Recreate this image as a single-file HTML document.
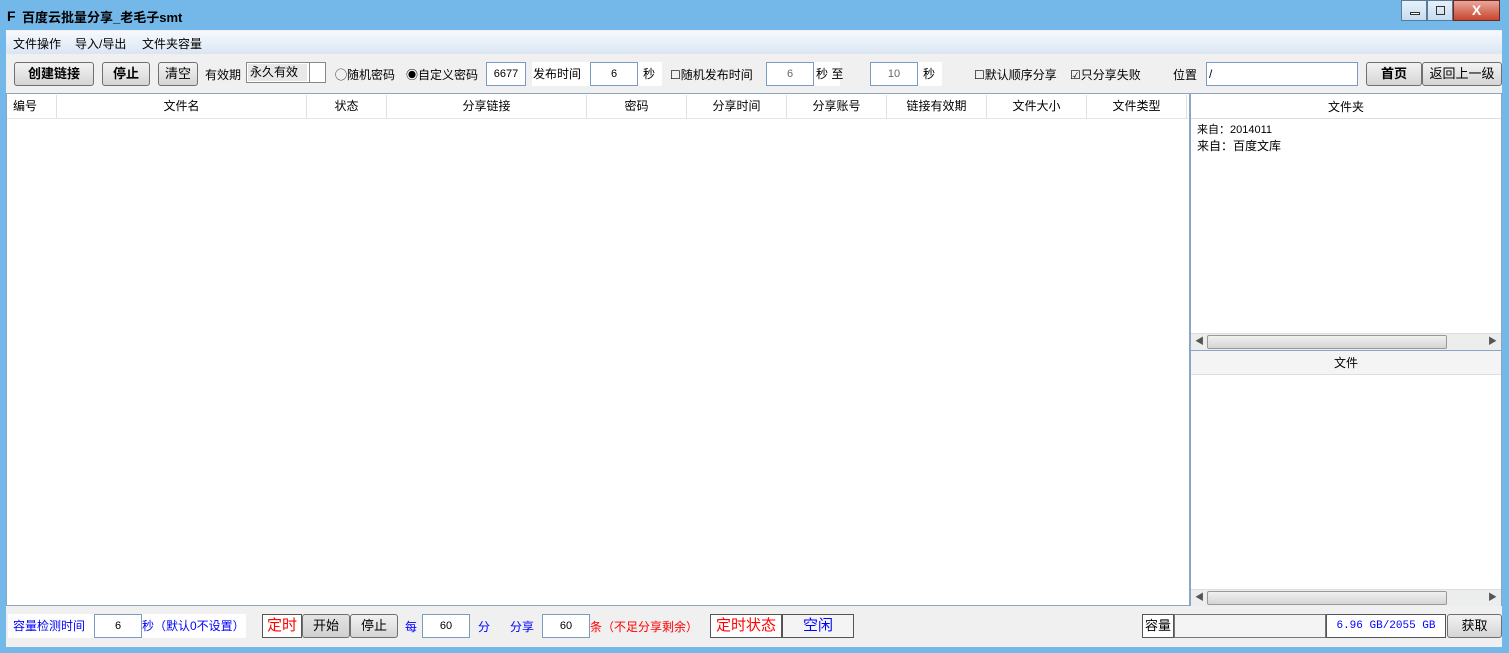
<!DOCTYPE html><html><head><meta charset="utf-8"><style>
*{box-sizing:border-box;margin:0;padding:0}
body{width:1509px;height:653px;background:#74b8ea;font:12px "Liberation Sans","Noto Sans CJK SC",sans-serif;color:#000;position:relative;overflow:hidden}
.a{position:absolute;white-space:nowrap}
.btn{position:absolute;border:1px solid #707070;border-radius:3px;background:linear-gradient(#f2f2f2,#e4e4e4 50%,#d4d4d4);text-align:center;font-size:13px}
.inp{position:absolute;background:#fff;border:1px solid #7a9cc0;text-align:center;font-size:11px}
.hd{position:absolute;top:95px;height:23px;line-height:23px;text-align:center;border-right:1px solid #e0e0e0;background:#fff;font-size:12px}
.blu{color:#0000ff}.red{color:#f00}
.sb{position:absolute;height:17px;background:#eceeee;border-top:1px solid #ddd}
.thumb{position:absolute;top:1px;height:14px;background:linear-gradient(#f0f0f0,#d5d5d5);border:1px solid #999;border-radius:2px}
</style></head><body>
<div class="a" style="left:7px;top:8px;font-size:14px;font-weight:bold">F</div>
<div class="a" style="left:22px;top:7px;font-size:13px;font-weight:bold">百度云批量分享_老毛子smt</div>
<div class="a" style="left:1401px;top:0;width:26px;height:21px;background:linear-gradient(#e8f1fa,#c6dcf0);border:1px solid #5a7a9a"><div style="position:absolute;left:8px;top:11px;width:10px;height:3px;background:#fff;border:1px solid #333"></div></div>
<div class="a" style="left:1427px;top:0;width:26px;height:21px;background:linear-gradient(#e8f1fa,#c6dcf0);border:1px solid #5a7a9a"><div style="position:absolute;left:8px;top:5px;width:9px;height:9px;border:1px solid #333"></div></div>
<div class="a" style="left:1453px;top:0;width:47px;height:21px;background:linear-gradient(#e9a79b,#c8452d);border:1px solid #6a2a20;color:#fff;font-weight:bold;text-align:center;line-height:19px;font-size:14px">X</div>
<div class="a" style="left:6px;top:30px;width:1496px;height:617px;background:#f0f0f0"></div>
<div class="a" style="left:6px;top:31px;width:1496px;height:23px;background:linear-gradient(#f6f9fd,#dbe6f3)"></div>
<div class="a" style="left:13px;top:35px;font-size:12px">文件操作</div>
<div class="a" style="left:75px;top:35px">导入/导出</div>
<div class="a" style="left:142px;top:35px">文件夹容量</div>
<div class="btn" style="left:14px;top:62px;width:80px;height:24px;line-height:22px;font-weight:bold">创建链接</div>
<div class="btn" style="left:102px;top:62px;width:48px;height:24px;line-height:22px;font-weight:bold">停止</div>
<div class="btn" style="left:158px;top:62px;width:40px;height:24px;line-height:22px">清空</div>
<div class="a" style="left:205px;top:66px">有效期</div>
<div class="a" style="left:246px;top:62px;width:80px;height:21px;background:#fff;border:1px solid #888"><div style="position:absolute;left:1px;top:1px;width:59px;height:17px;background:#e8e8e8;line-height:16px;padding-left:2px">永久有效</div><div style="position:absolute;left:62px;top:0;height:19px;border-left:1px solid #888"></div></div>
<div class="a" style="left:335px;top:66px">◯随机密码</div>
<div class="a" style="left:406px;top:66px">◉自定义密码</div>
<div class="inp" style="left:486px;top:62px;width:40px;height:24px;line-height:22px">6677</div>
<div class="a" style="left:532px;top:62px;width:60px;height:24px;background:#fff;line-height:24px;padding-left:1px">发布时间</div>
<div class="inp" style="left:590px;top:62px;width:48px;height:24px;line-height:22px">6</div>
<div class="a" style="left:638px;top:62px;width:24px;height:24px;background:#fff;line-height:24px;padding-left:5px">秒</div>
<div class="a" style="left:670px;top:66px">☐随机发布时间</div>
<div class="inp" style="left:766px;top:62px;width:48px;height:24px;line-height:22px;color:#666">6</div>
<div class="a" style="left:814px;top:62px;width:26px;height:24px;background:#fff;line-height:24px;padding-left:2px">秒 至</div>
<div class="inp" style="left:870px;top:62px;width:48px;height:24px;line-height:22px;color:#666">10</div>
<div class="a" style="left:918px;top:62px;width:24px;height:24px;background:#fff;line-height:24px;padding-left:5px">秒</div>
<div class="a" style="left:974px;top:66px">☐默认顺序分享</div>
<div class="a" style="left:1070px;top:66px">☑只分享失败</div>
<div class="a" style="left:1173px;top:66px">位置</div>
<div class="inp" style="left:1206px;top:62px;width:152px;height:24px;line-height:22px;text-align:left;padding-left:2px;font-size:12px">/</div>
<div class="btn" style="left:1366px;top:62px;width:56px;height:24px;line-height:22px;font-weight:bold">首页</div>
<div class="btn" style="left:1422px;top:62px;width:80px;height:24px;line-height:22px">返回上一级</div>
<div class="a" style="left:6px;top:93px;width:1184px;height:513px;background:#fff;border:1px solid #8aa6c4"></div>
<div class="a" style="left:7px;top:118px;width:1181px;border-top:1px solid #e5e5e5"></div>
<div class="hd" style="left:7px;width:50px;text-align:left;padding-left:6px">编号</div>
<div class="hd" style="left:57px;width:250px">文件名</div>
<div class="hd" style="left:307px;width:80px">状态</div>
<div class="hd" style="left:387px;width:200px">分享链接</div>
<div class="hd" style="left:587px;width:100px">密码</div>
<div class="hd" style="left:687px;width:100px">分享时间</div>
<div class="hd" style="left:787px;width:100px">分享账号</div>
<div class="hd" style="left:887px;width:100px">链接有效期</div>
<div class="hd" style="left:987px;width:100px">文件大小</div>
<div class="hd" style="left:1087px;width:100px">文件类型</div>
<div class="a" style="left:1189px;top:93px;width:313px;height:257px;background:#fff;border:1px solid #8aa6c4;border-left:2px solid #8aa6c4"></div>
<div class="a" style="left:1191px;top:95px;width:310px;height:24px;background:#fff;border-bottom:1px solid #ddd;text-align:center;line-height:24px">文件夹</div>
<div class="a" style="left:1197px;top:121px;font-size:11px">来自：2014011</div>
<div class="a" style="left:1197px;top:137px;font-size:12px">来自：百度文库</div>
<div class="sb" style="left:1191px;top:333px;width:310px"><span class="a" style="left:4px;top:0;font-size:9px;color:#555">◀</span><div class="thumb" style="left:16px;width:240px"></div><span class="a" style="right:4px;top:0;font-size:9px;color:#555">▶</span></div>
<div class="a" style="left:1189px;top:350px;width:313px;height:256px;background:#fff;border:1px solid #8aa6c4;border-left:2px solid #8aa6c4"></div>
<div class="a" style="left:1191px;top:351px;width:310px;height:24px;background:#f4f4f4;border-bottom:1px solid #ddd;text-align:center;line-height:24px">文件</div>
<div class="sb" style="left:1191px;top:589px;width:310px"><span class="a" style="left:4px;top:0;font-size:9px;color:#555">◀</span><div class="thumb" style="left:16px;width:240px"></div><span class="a" style="right:4px;top:0;font-size:9px;color:#555">▶</span></div>
<div class="a blu" style="left:8px;top:614px;width:238px;height:24px;background:#fff;line-height:24px;padding-left:5px;font-size:12px">容量检测时间</div>
<div class="a blu" style="left:142px;top:614px;line-height:24px">秒（默认0不设置）</div>
<div class="inp" style="left:94px;top:614px;width:48px;height:24px;line-height:22px">6</div>
<div class="a red" style="left:262px;top:614px;width:40px;height:24px;border:1px solid #555;text-align:center;line-height:22px;font-size:15px;background:#fff">定时</div>
<div class="btn" style="left:302px;top:614px;width:48px;height:24px;line-height:22px;background:linear-gradient(#e4e4e4,#d0d0d0)">开始</div>
<div class="btn" style="left:350px;top:614px;width:48px;height:24px;line-height:22px">停止</div>
<div class="a blu" style="left:405px;top:618px">每</div>
<div class="inp" style="left:422px;top:614px;width:48px;height:24px;line-height:22px">60</div>
<div class="a blu" style="left:478px;top:618px">分</div>
<div class="a blu" style="left:510px;top:618px">分享</div>
<div class="inp" style="left:542px;top:614px;width:48px;height:24px;line-height:22px">60</div>
<div class="a red" style="left:590px;top:618px">条（不足分享剩余）</div>
<div class="a red" style="left:710px;top:614px;width:72px;height:24px;border:1px solid #555;text-align:center;line-height:22px;font-size:15px;background:#fff">定时状态</div>
<div class="a blu" style="left:782px;top:614px;width:72px;height:24px;border:1px solid #555;text-align:center;line-height:22px;font-size:15px;background:#f4f4f4">空闲</div>
<div class="a" style="left:1142px;top:614px;width:32px;height:24px;border:1px solid #555;text-align:center;line-height:22px;font-size:13px;background:#fff">容量</div>
<div class="a" style="left:1174px;top:614px;width:152px;height:24px;border:1px solid #777;background:#f4f4f4"></div>
<div class="a blu" style="left:1326px;top:614px;width:120px;height:24px;border:1px solid #555;background:#fff;text-align:center;line-height:22px;font:11px 'Liberation Mono',monospace;line-height:22px">6.96 GB/2055 GB</div>
<div class="btn" style="left:1447px;top:614px;width:55px;height:24px;line-height:22px">获取</div>
</body></html>
